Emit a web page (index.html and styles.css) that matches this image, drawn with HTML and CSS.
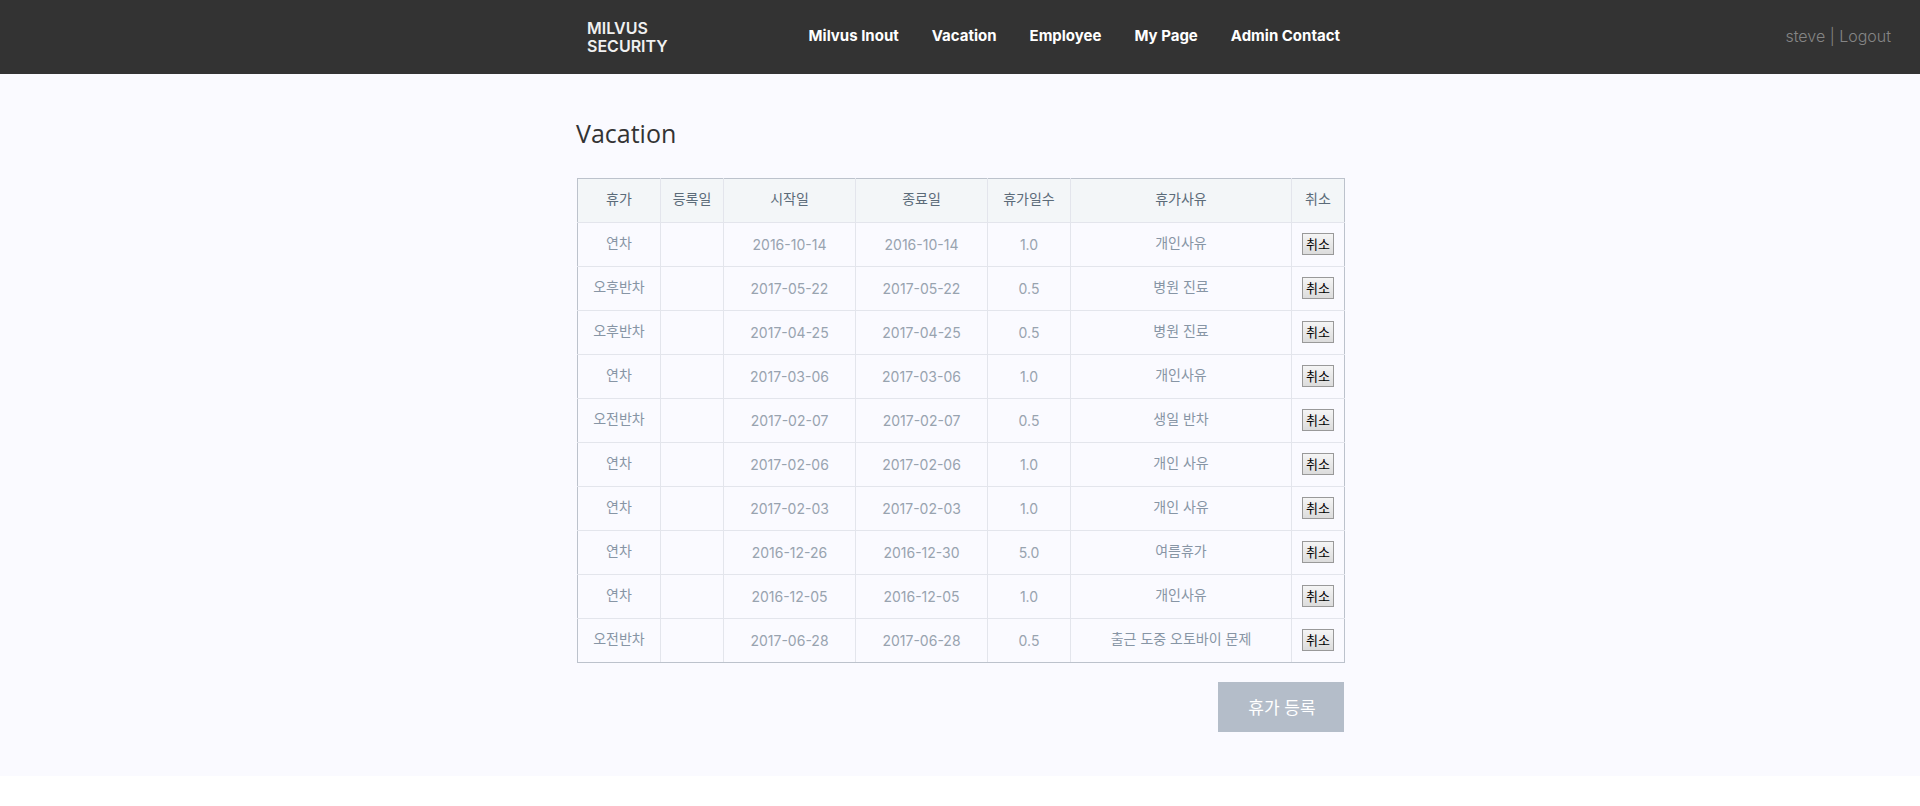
FILE: index.html
```html
<!DOCTYPE html>
<html lang="ko">
<head>
<meta charset="utf-8">
<meta name="viewport" content="width=device-width, initial-scale=1">
<title>Vacation - Milvus Security</title>
<link rel="stylesheet" href="styles.css">
</head>
<body>
<header class="header">
  <div class="header-inner">
    <a class="logo" href="#">MILVUS<br>SECURITY</a>
    <nav class="nav">
      <a href="#">Milvus Inout</a>
      <a href="#">Vacation</a>
      <a href="#">Employee</a>
      <a href="#">My Page</a>
      <a href="#">Admin Contact</a>
    </nav>
  </div>
  <div class="user"><span>steve</span> | <a href="#">Logout</a></div>
</header>
<main class="main">
  <div class="content">
    <h1 class="title">Vacation</h1>
    <table class="table">
      <colgroup>
        <col class="col-type"><col class="col-reg"><col class="col-date"><col class="col-date"><col class="col-type"><col class="col-reason"><col class="col-cancel">
      </colgroup>
      <thead>
        <tr><th>휴가</th><th>등록일</th><th>시작일</th><th>종료일</th><th>휴가일수</th><th>휴가사유</th><th>취소</th></tr>
      </thead>
      <tbody>
        <tr><td>연차</td><td></td><td class="num">2016-10-14</td><td class="num">2016-10-14</td><td class="num">1.0</td><td>개인사유</td><td><button class="cancel" type="button">취소</button></td></tr>
        <tr><td>오후반차</td><td></td><td class="num">2017-05-22</td><td class="num">2017-05-22</td><td class="num">0.5</td><td>병원 진료</td><td><button class="cancel" type="button">취소</button></td></tr>
        <tr><td>오후반차</td><td></td><td class="num">2017-04-25</td><td class="num">2017-04-25</td><td class="num">0.5</td><td>병원 진료</td><td><button class="cancel" type="button">취소</button></td></tr>
        <tr><td>연차</td><td></td><td class="num">2017-03-06</td><td class="num">2017-03-06</td><td class="num">1.0</td><td>개인사유</td><td><button class="cancel" type="button">취소</button></td></tr>
        <tr><td>오전반차</td><td></td><td class="num">2017-02-07</td><td class="num">2017-02-07</td><td class="num">0.5</td><td>생일 반차</td><td><button class="cancel" type="button">취소</button></td></tr>
        <tr><td>연차</td><td></td><td class="num">2017-02-06</td><td class="num">2017-02-06</td><td class="num">1.0</td><td>개인 사유</td><td><button class="cancel" type="button">취소</button></td></tr>
        <tr><td>연차</td><td></td><td class="num">2017-02-03</td><td class="num">2017-02-03</td><td class="num">1.0</td><td>개인 사유</td><td><button class="cancel" type="button">취소</button></td></tr>
        <tr><td>연차</td><td></td><td class="num">2016-12-26</td><td class="num">2016-12-30</td><td class="num">5.0</td><td>여름휴가</td><td><button class="cancel" type="button">취소</button></td></tr>
        <tr><td>연차</td><td></td><td class="num">2016-12-05</td><td class="num">2016-12-05</td><td class="num">1.0</td><td>개인사유</td><td><button class="cancel" type="button">취소</button></td></tr>
        <tr><td>오전반차</td><td></td><td class="num">2017-06-28</td><td class="num">2017-06-28</td><td class="num">0.5</td><td>출근 도중 오토바이 문제</td><td><button class="cancel" type="button">취소</button></td></tr>
      </tbody>
    </table>
    <div class="actions"><button class="register" type="button">휴가 등록</button></div>
  </div>
</main>
</body>
</html>
```
FILE: styles.css
```css
* { box-sizing: border-box; }

body {
  margin: 0;
  background: #fff;
  font-family: Inter, "Noto Sans CJK KR", sans-serif;
  font-size: 14px;
}

a { color: inherit; text-decoration: none; }

.header {
  display: grid;
  grid-template-columns: 1fr minmax(0, 768px) 1fr;
  align-items: center;
  height: 74px;
  background: #333;
  color: #fff;
}

.header-inner {
  grid-column: 2;
  display: flex;
  align-items: center;
  justify-content: space-between;
  padding: 0 4px 0 11px;
}

.logo {
  font-size: 16px;
  font-weight: 600;
  line-height: 18px;
  color: #f0f0f0;
}

.nav {
  display: flex;
  gap: 33px;
  font-size: 15px;
  font-weight: 700;
  line-height: 20px;
  padding-bottom: 2px;
  white-space: nowrap;
}

.user {
  padding: 0 29px 2px 0;
  text-align: right;
  font-size: 16px;
  font-weight: 300;
  line-height: 20px;
  color: #858585;
}

.main {
  padding: 40px 0 44px;
  background: #fafaff;
}

.content {
  max-width: 768px;
  margin: 0 auto;
}

.title {
  margin: 0 0 26px;
  font-family: "Open Sans", "Noto Sans", sans-serif;
  font-size: 25px;
  font-weight: 500;
  line-height: 38px;
  color: #333;
}

.table {
  width: 100%;
  margin-left: 1px;
  table-layout: fixed;
  border-collapse: collapse;
  border: 1px solid #bcc2cc;
  text-align: center;
  color: #8795a5;
}

.col-type { width: 83px; }
.col-reg { width: 63px; }
.col-date { width: 132px; }
.col-cancel { width: 53px; }

.table th,
.table td {
  height: 44px;
  padding: 0 0 4px;
  border: 1px solid #e3e5ec;
  font-weight: 400;
  line-height: 20px;
}

.table th {
  background: #f3f6f8;
  color: #5b6b79;
}

.table thead th { border-top-color: #bcc2cc; }
.table tr > :first-child { border-left-color: #bcc2cc; }
.table tr > :last-child { border-right-color: #bcc2cc; }
.table tbody tr:last-child td { border-bottom-color: #bcc2cc; }

.table .num {
  padding: 0;
  color: #98a3af;
}

.cancel {
  display: block;
  width: 32px;
  height: 22px;
  margin: 2px auto 0;
  padding: 0;
  border: 1px solid #999;
  background: linear-gradient(#f5f5f5, #dcdcdc);
  font-family: "Noto Sans CJK KR", sans-serif;
  font-size: 13px;
  font-weight: 400;
  line-height: 20px;
  color: #000;
}

.actions {
  display: flex;
  justify-content: flex-end;
  margin-top: 19px;
}

.register {
  width: 126px;
  height: 50px;
  padding: 0 0 0 2px;
  border: 0;
  background: #b4bdc9;
  font-family: "Noto Sans CJK KR", sans-serif;
  font-size: 17px;
  line-height: 20px;
  color: #fff;
}
```
